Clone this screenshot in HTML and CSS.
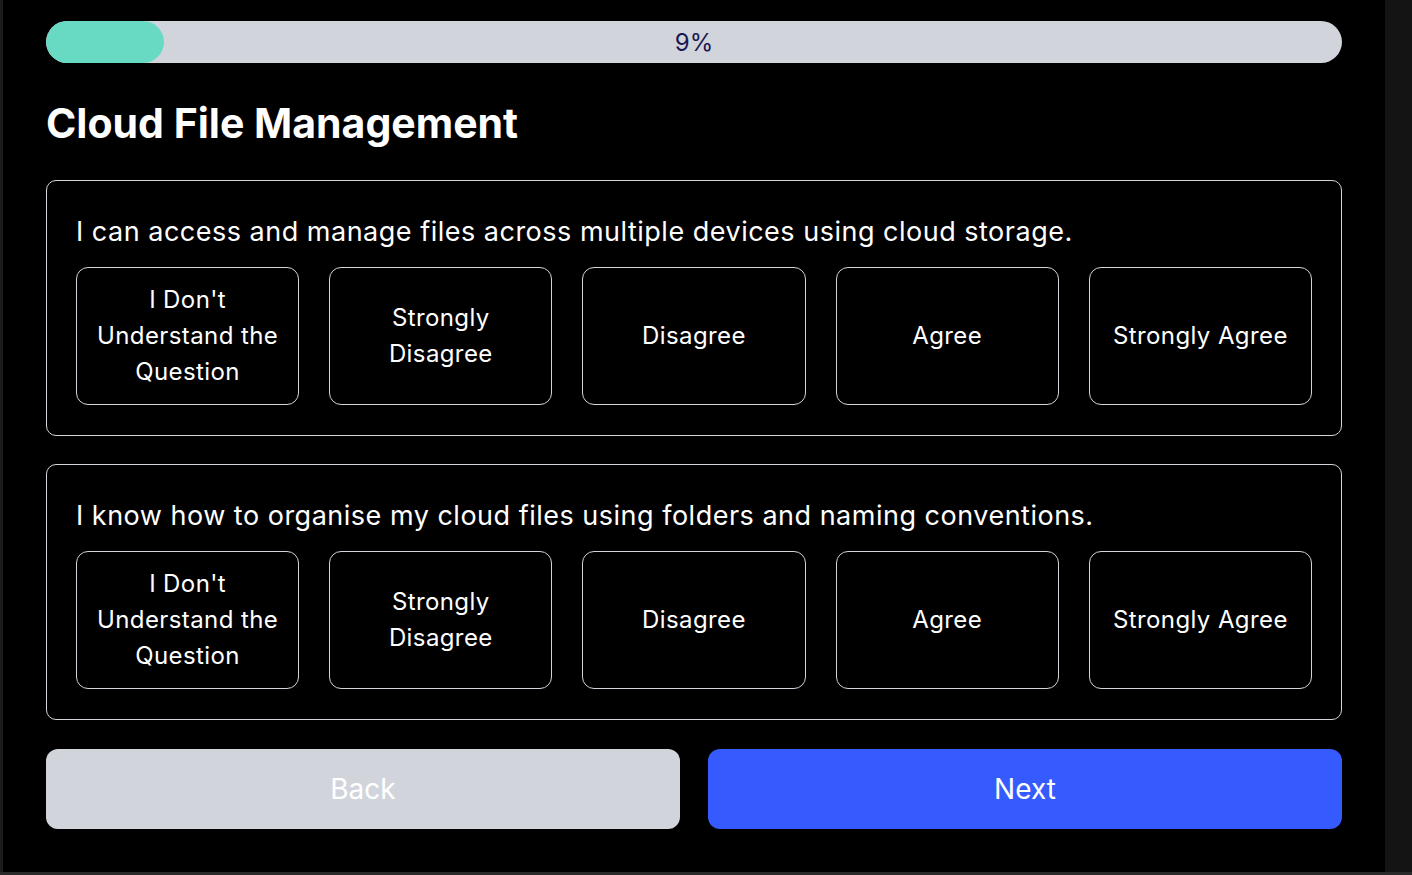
FILE: index.html
```html
<!DOCTYPE html>
<html lang="en">
<head>
<meta charset="utf-8">
<title>Cloud File Management</title>
<link rel="stylesheet" href="styles.css">
</head>
<body>
<div class="app">
  <main class="main">
    <div class="progress">
      <div class="progress-fill" style="width:118px"></div>
      <span class="progress-label">9%</span>
    </div>
    <h1 class="title">Cloud File Management</h1>
    <section class="card">
      <p class="question">I can access and manage files across multiple devices using cloud storage.</p>
      <div class="options">
        <button class="option">I Don't Understand the Question</button>
        <button class="option">Strongly Disagree</button>
        <button class="option">Disagree</button>
        <button class="option">Agree</button>
        <button class="option">Strongly Agree</button>
      </div>
    </section>
    <section class="card">
      <p class="question">I know how to organise my cloud files using folders and naming conventions.</p>
      <div class="options">
        <button class="option">I Don't Understand the Question</button>
        <button class="option">Strongly Disagree</button>
        <button class="option">Disagree</button>
        <button class="option">Agree</button>
        <button class="option">Strongly Agree</button>
      </div>
    </section>
    <div class="nav">
      <button class="nav-btn back">Back</button>
      <button class="nav-btn next">Next</button>
    </div>
  </main>
  <div class="side"></div>
</div>
<div class="bottom"></div>
</body>
</html>
```
FILE: styles.css
```css
* { box-sizing: border-box; }
html, body { margin: 0; padding: 0; }
body {
  background: #141414;
  font-family: Inter, "Noto Sans", sans-serif;
  color: #fff;
  width: 1412px;
  height: 875px;
  overflow: hidden;
}
.app {
  display: flex;
  height: 872px;
}
.main {
  width: 1385px;
  background: #000;
  border-left: 3px solid #1c1c1c;
  padding: 21px 43px 0 43px;
}
.side {
  flex: 1;
  background: #141414;
}
.bottom {
  height: 3px;
  background: #2a2a2a;
}
.progress {
  position: relative;
  height: 42px;
  border-radius: 21px;
  background: #d1d5db;
  overflow: hidden;
  display: flex;
  align-items: center;
  justify-content: center;
}
.progress-fill {
  position: absolute;
  left: 0;
  top: 0;
  bottom: 0;
  background: #68d9c2;
  border-radius: 21px;
}
.progress-label {
  position: relative;
  top: 1px;
  font-size: 24px;
  color: #1a1852;
  line-height: 1;
}
.title {
  margin: 36px 0 33px;
  font-size: 41px;
  line-height: 48px;
  font-weight: 700;
}
.card {
  border: 1px solid #d1d5db;
  border-radius: 10px;
  padding: 31px 29px 30px;
  margin-bottom: 28px;
}
.question {
  margin: 0 0 16px;
  font-size: 27px;
  letter-spacing: 0.5px;
  line-height: 39px;
}
.options {
  display: grid;
  grid-template-columns: repeat(5, 1fr);
  gap: 30px;
}
.option {
  background: #000;
  color: #fff;
  border: 1px solid #d1d5db;
  border-radius: 12px;
  font-family: inherit;
  font-size: 24px;
  letter-spacing: 0.4px;
  line-height: 36px;
  padding: 14px 16px;
  min-height: 138px;
  text-align: center;
}
.nav {
  display: flex;
  gap: 28px;
  margin-top: 29px;
}
.nav-btn {
  flex: 1;
  height: 80px;
  border: none;
  border-radius: 12px;
  font-family: inherit;
  font-size: 28px;
  color: #fff;
}
.back { background: #d1d5db; }
.next { background: #355bff; }
```
